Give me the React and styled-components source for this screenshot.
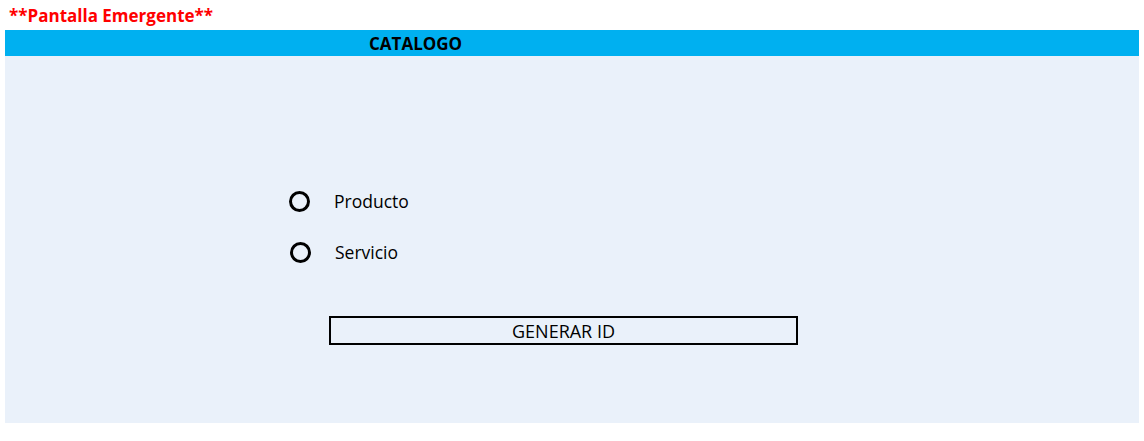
import React from 'react'
import { useState } from 'react'
import styled, { createGlobalStyle } from 'styled-components'

const GlobalStyle = createGlobalStyle`
  body {
    margin: 0;
    background: #ffffff;
    font-family: 'Open Sans', 'Liberation Sans', sans-serif;
  }
`

const Page = styled.div`
  width: 1144px;
  height: 441px;
  display: flex;
  flex-direction: column;
`

const Title = styled.div`
  height: 30px;
  padding-left: 9px;
  display: flex;
  align-items: center;
  color: #ff0000;
  font-family: 'Open Sans', 'Liberation Sans', sans-serif;
  font-weight: bold;
  font-size: 17px;
`

const Panel = styled.div`
  margin: 0 5px;
  display: flex;
  flex-direction: column;
`

const Header = styled.div`
  height: 26px;
  background: #00b0f0;
  display: flex;
  align-items: center;
  padding-left: 364px;
  font-family: 'Open Sans', 'Liberation Sans', sans-serif;
  font-weight: bold;
  font-size: 17px;
  color: #000;
`

const Body = styled.div`
  height: 367px;
  background: #eaf1fa;
  display: flex;
  flex-direction: column;
  padding: 133px 0 0 283px;
  box-sizing: border-box;
`

const Option = styled.label`
  display: flex;
  align-items: center;
  gap: 24px;
  height: 24px;
  margin-bottom: ${(p) => p.$space}px;
  padding-left: ${(p) => p.$shift}px;
  font-size: 17.5px;
  color: #000;
  cursor: pointer;
`

const Circle = styled.span`
  width: 21px;
  height: 21px;
  border: 3px solid #000;
  border-radius: 50%;
  box-sizing: border-box;
  display: flex;
  align-items: center;
  justify-content: center;
  &::after {
    content: '';
    width: 9px;
    height: 9px;
    border-radius: 50%;
    background: ${(p) => (p.$on ? '#000' : 'transparent')};
  }
`

const Button = styled.button`
  margin-left: 41px;
  width: 469px;
  height: 29px;
  border: 2px solid #000;
  background: transparent;
  font-family: 'Open Sans', 'Liberation Sans', sans-serif;
  font-size: 18px;
  color: #000;
  padding: 0;
`

export default function App() {
  const [tipo, setTipo] = useState(null)

  return (
    <Page>
      <GlobalStyle />
      <Title>**Pantalla Emergente**</Title>
      <Panel>
        <Header>CATALOGO</Header>
        <Body>
          <Option $space={27} $shift={1} onClick={() => setTipo('producto')}>
            <Circle $on={tipo === 'producto'} />
            Producto
          </Option>
          <Option $space={52} $shift={2} onClick={() => setTipo('servicio')}>
            <Circle $on={tipo === 'servicio'} />
            Servicio
          </Option>
          <Button>GENERAR ID</Button>
        </Body>
      </Panel>
    </Page>
  )
}
